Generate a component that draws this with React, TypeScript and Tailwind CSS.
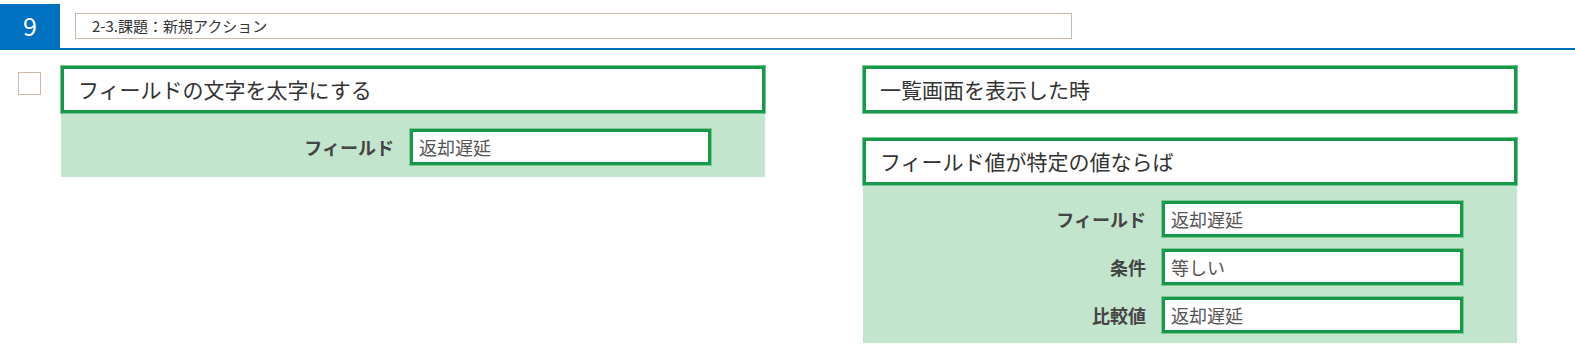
const font = { fontFamily: '"Noto Sans CJK JP", "Noto Sans", sans-serif' };

function TitleBox({ text }: { text: string }) {
	return (
		<div className="h-[47px] border-[3px] border-[#17994a] bg-white px-[14px] flex items-center text-[21px] text-[#333] outline outline-1 outline-[#7cc795]">
			{text}
		</div>
	);
}

function Field({ label, value }: { label: string; value: string }) {
	return (
		<div className="flex items-center justify-end pr-[54px]">
			<span className="text-[18px] font-bold text-[#444] mr-[16px]">{label}</span>
			<div className="w-[301px] h-[36px] border-[3px] border-[#17994a] bg-white px-[6px] flex items-center text-[18px] text-[#555] outline outline-1 outline-[#7cc795]">
				{value}
			</div>
		</div>
	);
}

export default function App() {
	return (
		<div className="w-[1575px] h-[353px] bg-white" style={font}>
			{/* HEADER */}
			<div className="pt-[4px] border-b-2 border-[#0070c0] flex items-center">
				<div className="w-[60px] h-[44px] bg-[#0070c0] text-white text-[25px] flex items-center justify-center">
					9
				</div>
				<div className="ml-[15px] w-[997px] h-[26px] border border-[#c9b9a6] px-[16px] flex items-center text-[15px] text-[#333]">
					2-3.課題：新規アクション
				</div>
			</div>

			{/* BODY */}
			<div className="flex pt-[16px]">
				<div className="w-[23px] h-[23px] border border-[#cdb9a4] ml-[18px] mt-[6px]" />

				{/* left card */}
				<div className="ml-[20px] w-[704px]">
					<TitleBox text="フィールドの文字を太字にする" />
					<div className="bg-[#c3e5cd] pt-[16px] pb-[12px]">
						<Field label="フィールド" value="返却遅延" />
					</div>
				</div>

				{/* right card */}
				<div className="ml-[98px] w-[654px]">
					<TitleBox text="一覧画面を表示した時" />
					<div className="mt-[25px]">
						<TitleBox text="フィールド値が特定の値ならば" />
					</div>
					<div className="bg-[#c3e5cd] pt-[16px] pb-[10px] flex flex-col gap-[12px]">
						<Field label="フィールド" value="返却遅延" />
						<Field label="条件" value="等しい" />
						<Field label="比較値" value="返却遅延" />
					</div>
				</div>
			</div>
		</div>
	);
}
